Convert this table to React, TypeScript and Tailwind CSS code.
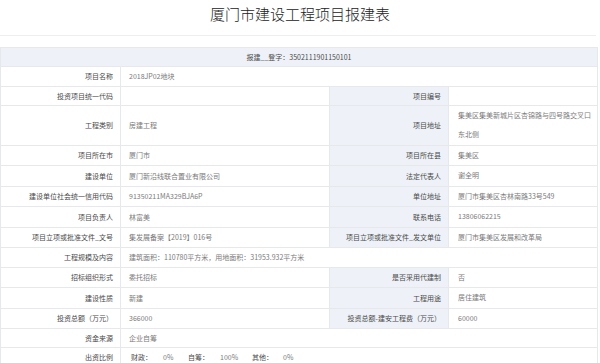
import React from 'react';

type Cell = { label: string; value?: React.ReactNode };

interface RowData {
  left: Cell;
  right?: Cell;
}

const rows: RowData[] = [
  { left: { label: '投资项目统一代码', value: '' }, right: { label: '项目编号', value: '' } },
  {
    left: { label: '工程类别', value: '房建工程' },
    right: { label: '项目地址', value: '集美区集美新城片区杏锦路与四号路交叉口东北侧' },
  },
  { left: { label: '项目所在市', value: '厦门市' }, right: { label: '项目所在县', value: '集美区' } },
  { left: { label: '建设单位', value: '厦门新沿线联合置业有限公司' }, right: { label: '法定代表人', value: '谢全明' } },
  {
    left: { label: '建设单位社会统一信用代码', value: '91350211MA329BJA6P' },
    right: { label: '单位地址', value: '厦门市集美区杏林南路33号549' },
  },
  { left: { label: '项目负责人', value: '林富美' }, right: { label: '联系电话', value: '13806062215' } },
  {
    left: { label: '项目立项或批准文件_文号', value: '集发展备案【2019】016号' },
    right: { label: '项目立项或批准文件_发文单位', value: '厦门市集美区发展和改革局' },
  },
  { left: { label: '工程规模及内容', value: '建筑面积：110780平方米，用地面积：31953.932平方米' } },
  { left: { label: '招标组织形式', value: '委托招标' }, right: { label: '是否采用代建制', value: '否' } },
  { left: { label: '建设性质', value: '新建' }, right: { label: '工程用途', value: '居住建筑' } },
  { left: { label: '投资总额（万元）', value: '366000' }, right: { label: '投资总额-建安工程费（万元）', value: '60000' } },
  { left: { label: '资金来源', value: '企业自筹' } },
];

const labelCls = 'border border-[#e6e8ec] pr-[7px] text-right text-[#4a4a4a] align-middle whitespace-nowrap';
const valueCls = 'border border-[#e6e8ec] pl-[8px] text-left text-[#7a7a7a] align-middle';

// 出资比例 row: label/value pairs laid out inline
const Ratio: React.FC = () => (
  <div className="flex items-center pl-[2px]">
    <span className="text-[#4a4a4a]">财政：</span>
    <span className="ml-[11px] w-[25px]">0%</span>
    <span className="text-[#4a4a4a]">自筹：</span>
    <span className="ml-[11px] w-[32px]">100%</span>
    <span className="text-[#4a4a4a]">其他：</span>
    <span className="ml-[10px]">0%</span>
  </div>
);

export default function App() {
  return (
    <div
      className="w-[600px] h-[363px] overflow-hidden bg-white"
      style={{ fontFamily: '"Noto Sans CJK SC", "Noto Sans", sans-serif' }}
    >
      <div className="h-[28px] flex items-center justify-center text-[15px] font-light text-[#222]">
        厦门市建设工程项目报建表
      </div>
      <div className="mt-[7px] w-[596px] border-t border-[#eeeeee]" />
      <table className="mt-[11px] w-[597px] border-collapse table-fixed text-[7px] leading-[18.3px]">
        <colgroup>
          <col className="w-[120px]" />
          <col className="w-[209px]" />
          <col className="w-[119px]" />
          <col className="w-[149px]" />
        </colgroup>
        <tbody>
          <tr className="bg-[#eef2f8]">
            <td colSpan={4} className="border border-[#e6e8ec] text-center text-[#4a4a4a]">
              报建__登字：3502111901150101
            </td>
          </tr>
          <tr>
            <td className={labelCls}>项目名称</td>
            <td className={valueCls} colSpan={3}>
              2018JP02地块
            </td>
          </tr>
          {rows.map((r, i) => (
            <tr key={i}>
              <td className={labelCls}>{r.left.label}</td>
              {r.right ? (
                <>
                  <td className={valueCls}>{r.left.value}</td>
                  <td className={`${labelCls} bg-[#eef2f8]`}>{r.right.label}</td>
                  <td className={`${valueCls} pl-[9px] pr-[2px] leading-[19.5px]`}>{r.right.value}</td>
                </>
              ) : (
                <td className={`${valueCls} whitespace-nowrap`} colSpan={3}>
                  {r.left.value}
                </td>
              )}
            </tr>
          ))}
          <tr>
            <td className={labelCls}>出资比例</td>
            <td className={valueCls} colSpan={3}>
              <Ratio />
            </td>
          </tr>
        </tbody>
      </table>
    </div>
  );
}
